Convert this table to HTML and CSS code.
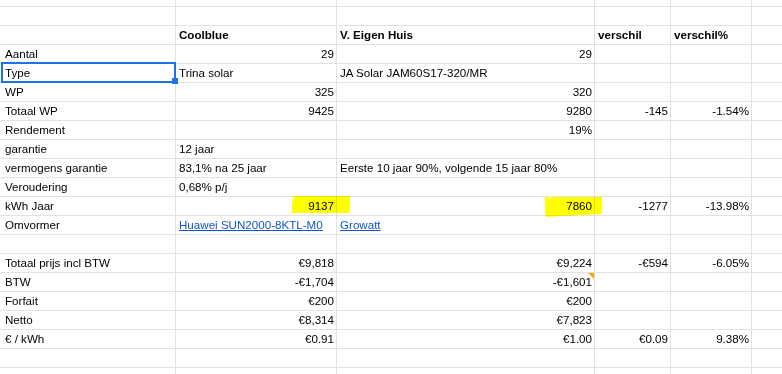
FILE: index.html
```html
<!DOCTYPE html>
<html>
<head>
<meta charset="utf-8">
<link rel="stylesheet" href="styles.css">
</head>
<body>
<div class="sheet">
  <div class="c"></div><div class="c"></div><div class="c"></div><div class="c"></div><div class="c"></div><div class="c"></div><div class="c"></div>
  <div class="c"></div><div class="c"></div><div class="c"></div><div class="c"></div><div class="c"></div><div class="c"></div><div class="c"></div>

  <div class="c"></div><div class="c"></div><div class="c b">Coolblue</div><div class="c b">V. Eigen Huis</div><div class="c b">verschil</div><div class="c b">verschil%</div><div class="c"></div>

  <div class="c"></div><div class="c">Aantal</div><div class="c n">29</div><div class="c n">29</div><div class="c"></div><div class="c"></div><div class="c"></div>
  <div class="c"></div><div class="c">Type</div><div class="c">Trina solar</div><div class="c">JA Solar JAM60S17-320/MR</div><div class="c"></div><div class="c"></div><div class="c"></div>
  <div class="c"></div><div class="c">WP</div><div class="c n">325</div><div class="c n">320</div><div class="c"></div><div class="c"></div><div class="c"></div>
  <div class="c"></div><div class="c">Totaal WP</div><div class="c n">9425</div><div class="c n">9280</div><div class="c n">-145</div><div class="c n">-1.54%</div><div class="c"></div>
  <div class="c"></div><div class="c">Rendement</div><div class="c"></div><div class="c n">19%</div><div class="c"></div><div class="c"></div><div class="c"></div>
  <div class="c"></div><div class="c">garantie</div><div class="c">12 jaar</div><div class="c"></div><div class="c"></div><div class="c"></div><div class="c"></div>
  <div class="c"></div><div class="c">vermogens garantie</div><div class="c">83,1% na 25 jaar</div><div class="c">Eerste 10 jaar 90%, volgende 15 jaar 80%</div><div class="c"></div><div class="c"></div><div class="c"></div>
  <div class="c"></div><div class="c">Veroudering</div><div class="c">0,68% p/j</div><div class="c"></div><div class="c"></div><div class="c"></div><div class="c"></div>
  <div class="c"></div><div class="c">kWh Jaar</div><div class="c n">9137</div><div class="c n">7860</div><div class="c n">-1277</div><div class="c n">-13.98%</div><div class="c"></div>
  <div class="c"></div><div class="c">Omvormer</div><div class="c"><a class="lnk" href="#">Huawei SUN2000-8KTL-M0</a></div><div class="c"><a class="lnk" href="#">Growatt</a></div><div class="c"></div><div class="c"></div><div class="c"></div>
  <div class="c"></div><div class="c"></div><div class="c"></div><div class="c"></div><div class="c"></div><div class="c"></div><div class="c"></div>

  <div class="c"></div><div class="c">Totaal prijs incl BTW</div><div class="c n">€9,818</div><div class="c n">€9,224</div><div class="c n">-€594</div><div class="c n">-6.05%</div><div class="c"></div>
  <div class="c"></div><div class="c">BTW</div><div class="c n">-€1,704</div><div class="c n note">-€1,601</div><div class="c"></div><div class="c"></div><div class="c"></div>
  <div class="c"></div><div class="c">Forfait</div><div class="c n">€200</div><div class="c n">€200</div><div class="c"></div><div class="c"></div><div class="c"></div>
  <div class="c"></div><div class="c">Netto</div><div class="c n">€8,314</div><div class="c n">€7,823</div><div class="c"></div><div class="c"></div><div class="c"></div>
  <div class="c"></div><div class="c">€ / kWh</div><div class="c n">€0.91</div><div class="c n">€1.00</div><div class="c n">€0.09</div><div class="c n">9.38%</div><div class="c"></div>
  <div class="c"></div><div class="c"></div><div class="c"></div><div class="c"></div><div class="c"></div><div class="c"></div><div class="c"></div>
  <div class="c"></div><div class="c"></div><div class="c"></div><div class="c"></div><div class="c"></div><div class="c"></div><div class="c"></div>

  <svg class="marks" width="782" height="374" viewBox="0 0 782 374">
    <polygon points="294,196 350,196 350,212 347,213 292,213 292,203" fill="#ffff00"/>
    <polygon points="545,197 548,197 550,199 552,197 602,197 602,214 560,216 546,217 545,213" fill="#ffff00"/>
  </svg>
  <div class="sel"></div>
  <div class="handle"></div>
</div>
</body>
</html>
```

FILE: styles.css
```css
html, body {
  margin: 0;
  padding: 0;
  background: #ffffff;
}

.sheet {
  position: relative;
  display: grid;
  grid-template-columns: 1px 173px 160px 257px 75px 80px 30px;
  grid-template-rows: 6px repeat(19, 18px) 6px;
  gap: 1px;
  width: 782px;
  height: 374px;
  overflow: hidden;
  background: #e2e2e2;
  font-family: "Liberation Sans", Arial, sans-serif;
  font-size: 11.6px;
  color: #000000;
}

.c {
  position: relative;
  background: #ffffff;
  padding: 0 2px 0 3px;
  line-height: 18px;
  white-space: nowrap;
  min-width: 0;
}

.n {
  text-align: right;
}

.b {
  font-weight: bold;
}

.lnk {
  color: #1155cc;
  text-decoration: underline;
}

.note::after {
  content: "";
  position: absolute;
  top: 0;
  right: 0;
  width: 0;
  height: 0;
  border-left: 6px solid transparent;
  border-top: 6px solid #f7a90c;
}

.marks {
  position: absolute;
  left: 0;
  top: 0;
  pointer-events: none;
  mix-blend-mode: multiply;
}

.sel {
  position: absolute;
  left: 1px;
  top: 62px;
  width: 171px;
  height: 17px;
  border: 2px solid #1a73e8;
  pointer-events: none;
}

.handle {
  position: absolute;
  left: 172px;
  top: 78px;
  width: 6px;
  height: 6px;
  background: #1a73e8;
}
```
